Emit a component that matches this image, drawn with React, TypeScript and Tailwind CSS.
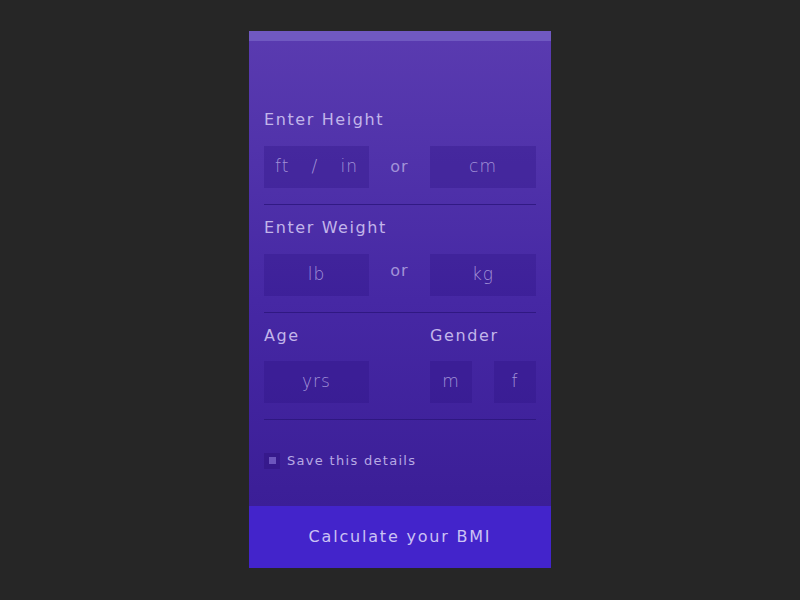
import { FC, ReactNode } from "react";

const font = { fontFamily: '"DejaVu Sans", "Liberation Sans", sans-serif' };

const Label: FC<{ children: ReactNode }> = ({ children }) => (
  <div className="h-5 text-[16px] leading-5 tracking-[1.6px] text-[#c2b5ea]">{children}</div>
);

const Box: FC<{ className?: string; children: ReactNode }> = ({ className = "", children }) => (
  <div
    className={`h-[42px] flex items-center bg-[#2a1180]/30 text-[17px] font-light tracking-[1px] text-[#a292d8] ${className}`}
  >
    {children}
  </div>
);

const Divider: FC = () => <div className="mt-4 h-px bg-[#2b157a]/80" />;

const App: FC = () => {
  return (
    <div className="min-h-screen bg-[#262626] flex justify-center pt-[31px]" style={font}>
      <div className="w-[302px] h-[537px] flex flex-col bg-gradient-to-b from-[#5a3bb0] via-[#4628a4] to-[#381b93]">
        <div className="h-[10px] bg-[#7059c1]" />

        <div className="px-[15px] pt-[69px]">
          {/* height */}
          <Label>Enter Height</Label>
          <div className="mt-4 grid grid-cols-[105px_1fr_106px] items-center">
            <Box className="justify-between px-[11px]">
              <span>ft</span>
              <span>/</span>
              <span>in</span>
            </Box>
            <span className="text-center text-[16px] tracking-[1px] text-[#a292d8]">or</span>
            <Box className="justify-center">cm</Box>
          </div>
          <Divider />

          {/* weight */}
          <div className="mt-[13px]">
            <Label>Enter Weight</Label>
          </div>
          <div className="mt-4 grid grid-cols-[105px_1fr_106px] items-center">
            <Box className="justify-center">lb</Box>
            <span className="-mt-[8px] text-center text-[16px] tracking-[1px] text-[#a292d8]">or</span>
            <Box className="justify-center">kg</Box>
          </div>
          <Divider />

          {/* age + gender */}
          <div className="mt-[13px] grid grid-cols-[166px_1fr]">
            <Label>Age</Label>
            <Label>Gender</Label>
          </div>
          <div className="mt-[15px] flex">
            <Box className="w-[105px] justify-center">yrs</Box>
            <div className="ml-auto flex gap-[22px]">
              <Box className="w-[42px] justify-center">m</Box>
              <Box className="w-[42px] justify-center">f</Box>
            </div>
          </div>
          <Divider />

          <label className="mt-[31px] flex items-center gap-[7px]">
            <span className="w-4 h-4 flex items-center justify-center bg-[#36198c]">
              <span className="w-[7px] h-[7px] bg-[#6c55bd]" />
            </span>
            <span className="text-[13px] tracking-[1.3px] text-[#b7a9e4]">Save this details</span>
          </label>
        </div>

        <button className="mt-auto h-[62px] bg-[#4324cb] text-[16px] tracking-[1.8px] text-[#cbc2f4]">
          Calculate your BMI
        </button>
      </div>
    </div>
  );
};

export default App;
